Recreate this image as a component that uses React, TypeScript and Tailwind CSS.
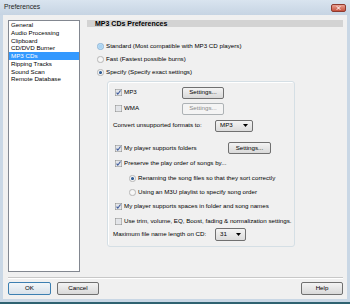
import React from "react";

function Radio({ checked, hot }: { checked?: boolean; hot?: boolean }) {
  return (
    <svg width="7" height="7" viewBox="0 0 14 14" className="shrink-0">
      <circle cx="7" cy="7" r="6.3" fill={hot ? "#c3e1f7" : "#ededed"} stroke={hot ? "#6f9cc8" : "#9a9a9a"} strokeWidth="1.2" />
      <circle cx="7" cy="7" r="4.2" fill={hot ? "#a9d3f2" : "#f7f7f7"} />
      {checked && <circle cx="7" cy="7" r="3" fill="#1d4b86" />}
      {checked && <circle cx="6.2" cy="6.2" r="1" fill="#6fa6dc" />}
    </svg>
  );
}

function Check({ checked }: { checked?: boolean }) {
  return (
    <svg width="7" height="7" viewBox="0 0 14 14" className="shrink-0">
      <rect x="0.6" y="0.6" width="12.8" height="12.8" fill="#f6f6f6" stroke="#8e8f8f" strokeWidth="1.2" />
      <rect x="2.2" y="2.2" width="9.6" height="9.6" fill="#e2e4e8" />
      {checked && <path d="M3.2 7.2 L5.6 10.4 L11 3" stroke="#3d5a9c" strokeWidth="2.2" fill="none" />}
    </svg>
  );
}

function Btn({ children, cls, disabled, def }: { children: React.ReactNode; cls: string; disabled?: boolean; def?: boolean }) {
  const base = "flex items-center justify-center rounded-[2px] border text-[6.2px] leading-none whitespace-nowrap shrink-0";
  const look = disabled
    ? "border-[#adb2b5] bg-[#f4f4f4] text-[#8a8a8a]"
    : def
    ? "border-[#3c7fb1] bg-gradient-to-b from-[#f2f6f9] to-[#d9e2ea] text-black"
    : "border-[#707070] bg-gradient-to-b from-[#f3f3f3] to-[#d9d9d9] text-black";
  return <div className={`${base} ${look} ${cls}`}>{children}</div>;
}

function Combo({ value, cls }: { value: string; cls: string }) {
  return (
    <div className={`flex items-center justify-between rounded-[2px] border border-[#707070] bg-gradient-to-b from-[#f3f3f3] to-[#dcdcdc] pl-[4px] pr-[4px] text-[6.2px] leading-none shrink-0 ${cls}`}>
      <span>{value}</span>
      <svg width="5" height="3" viewBox="0 0 10 6">
        <path d="M0 0 L10 0 L5 6 Z" fill="#000" />
      </svg>
    </div>
  );
}

const items = ["General", "Audio Processing", "Clipboard", "CD/DVD Burner", "MP3 CDs", "Ripping Tracks", "Sound Scan", "Remote Database"];

export default function App() {
  return (
    <div className="w-[350px] h-[304px] flex flex-col bg-[#c9d7e5] font-['Liberation_Sans',Arial,sans-serif] text-black overflow-hidden">
      {/* title bar */}
      <div className="h-[15px] flex items-center justify-between pl-[4px] pr-[4px] bg-gradient-to-b from-[#d9e4ef] to-[#c6d4e3] shrink-0">
        <span className="text-[6.7px] leading-none text-[#1e1e1e]">Preferences</span>
        <div className="w-[15px] h-[8px] rounded-[2px] border border-[#8e3a2e] bg-gradient-to-b from-[#e8a193] to-[#c6503c] flex items-center justify-center">
          <svg width="5" height="4" viewBox="0 0 10 8">
            <path d="M1.5 0.5 L8.5 7.5 M8.5 0.5 L1.5 7.5" stroke="#fff" strokeWidth="2" />
          </svg>
        </div>
      </div>
      {/* client */}
      <div className="mx-[3px] h-[284px] bg-[#f0f0f0] pt-[5px] pl-[5px] pr-[4px] pb-[4px] flex flex-col shrink-0">
        <div className="h-[252px] flex gap-[7px] shrink-0">
          {/* list */}
          <div className="w-[72px] h-[252px] border border-[#828790] bg-white text-[6.2px] shrink-0">
            {items.map((it) => (
              <div
                key={it}
                className={`h-[7.75px] leading-[7.75px] pl-[2px] whitespace-nowrap ${it === "MP3 CDs" ? "bg-[#3399ff] text-white" : "text-black"}`}
              >
                {it}
              </div>
            ))}
          </div>
          {/* right panel */}
          <div className="flex-1 flex flex-col text-[6.2px] leading-none">
            <div className="h-[7px] bg-[#d3d3d3] pl-[8px] flex items-center text-[7px] font-bold whitespace-nowrap">MP3 CDs Preferences</div>
            <div className="mt-[12.5px] flex flex-col pl-[9.5px]">
              <div className="h-[13px] flex items-center gap-[2.5px] whitespace-nowrap"><Radio hot />Standard (Most compatible with MP3 CD players)</div>
              <div className="h-[13px] flex items-center gap-[2.5px] whitespace-nowrap"><Radio />Fast (Fastest possible burns)</div>
              <div className="h-[13px] flex items-center gap-[2.5px] whitespace-nowrap"><Radio checked />Specify (Specify exact settings)</div>
            </div>
            {/* group box */}
            <div className="mt-[2.5px] ml-[20px] w-[188px] h-[166px] border border-[#d5dfe5] rounded-[3px] shadow-[inset_1px_1px_0_#ffffff] flex flex-col pl-[5px] whitespace-nowrap">
              <div className="mt-[4px] h-[13px] flex items-center pl-[1.5px]">
                <div className="w-[67.5px] flex items-center gap-[2.5px]"><Check checked />MP3</div>
                <Btn cls="w-[42px] h-[12px]">Settings...</Btn>
              </div>
              <div className="mt-[3px] h-[13px] flex items-center pl-[1.5px]">
                <div className="w-[67.5px] flex items-center gap-[2.5px]"><Check />WMA</div>
                <Btn cls="w-[42px] h-[12px]" disabled>Settings...</Btn>
              </div>
              <div className="mt-[4px] h-[13px] flex items-center">
                <div className="w-[102px]">Convert unsupported formats to:</div>
                <Combo value="MP3" cls="w-[38px] h-[12px]" />
              </div>
              <div className="mt-[9px] h-[14px] flex items-center pl-[1.5px]">
                <div className="w-[113.5px] flex items-center gap-[2.5px]"><Check checked />My player supports folders</div>
                <Btn cls="w-[43px] h-[11.5px]">Settings...</Btn>
              </div>
              <div className="mt-[1px] h-[14px] flex items-center gap-[2.5px] pl-[1.5px]"><Check checked />Preserve the play order of songs by...</div>
              <div className="mt-[1px] h-[14px] flex items-center gap-[2.5px] pl-[15.5px]"><Radio checked />Renaming the song files so that they sort correctly</div>
              <div className="h-[14px] flex items-center gap-[2.5px] pl-[15.5px]"><Radio />Using an M3U playlist to specify song order</div>
              <div className="h-[14px] flex items-center gap-[2.5px] pl-[1.5px]"><Check checked />My player supports spaces in folder and song names</div>
              <div className="mt-[1px] h-[14px] flex items-center gap-[2.5px] pl-[1.5px]"><Check />Use trim, volume, EQ, Boost, fading &amp; normalization settings.</div>
              <div className="h-[13px] flex items-center">
                <div className="w-[102px]">Maximum file name length on CD:</div>
                <Combo value="31" cls="w-[31px] h-[13px]" />
              </div>
            </div>
          </div>
        </div>
        {/* separator */}
        <div className="mt-[5px] h-[2px] border-t border-[#c8c8c8] border-b border-b-white shrink-0" />
        {/* buttons */}
        <div className="mt-[3px] h-[13px] flex items-center shrink-0">
          <Btn cls="w-[43px] h-[13px]" def>OK</Btn>
          <Btn cls="ml-[6px] w-[42px] h-[13px]">Cancel</Btn>
          <div className="flex-1" />
          <Btn cls="w-[42px] h-[13px]">Help</Btn>
        </div>
      </div>
      <div className="h-[3px] shrink-0" />
      <div className="h-[2px] bg-[#2f6271] shrink-0" />
    </div>
  );
}
